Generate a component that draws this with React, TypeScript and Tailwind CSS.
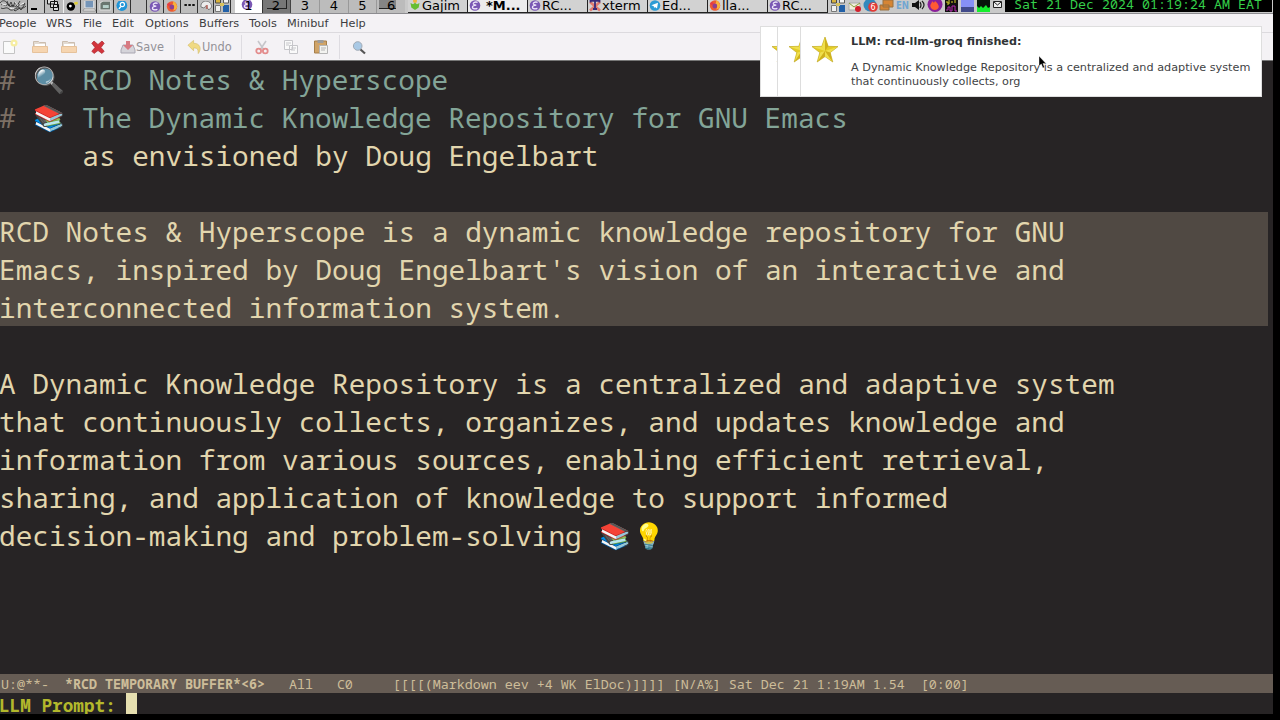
import React from 'react';

const EmacsIcon = () => (
  <svg className="h-3 w-3 shrink-0" viewBox="0 0 12 12">
    <circle cx="6" cy="5.500" r="5.300" fill="#7a58b4" />
    <path d="M8.600 2.300C6 1.500 4 2.500 4.300 3.900c.3 1 1.800 1.200 3 1.200-2 .2-3.900.7-3.900 2.200 0 1.600 2.800 1.900 5 1" fill="none" stroke="#eee6fa" strokeWidth="1.300" />
  </svg>
);

const FirefoxIcon = () => (
  <svg className="h-3 w-3 shrink-0" viewBox="0 0 12 12">
    <circle cx="6" cy="5.500" r="5.200" fill="#ee5a32" />
    <path d="M7 0c3 1.500 4.500 4 4 6.500-.5 2-2 3-4 3 2-2 1-5-1-5.500 1-1 1.500-2 1-4z" fill="#f8b13c" />
    <circle cx="5.800" cy="6" r="2.400" fill="#8b3f93" />
    <path d="M1 3.500c1-2 3-1 4 0l-2 2z" fill="#e33a48" />
  </svg>
);

const TelegramIcon = () => (
  <svg className="h-3 w-3 shrink-0" viewBox="0 0 12 12">
    <circle cx="6" cy="5.500" r="5.300" fill="#2c9bd4" />
    <path d="M2.400 5.300 9 2.700 8 8.500 6 7 5 8 4.800 6.300z" fill="#fff" />
  </svg>
);

const GajimIcon = () => (
  <svg className="h-3 w-3 shrink-0" viewBox="0 0 12 12">
    <circle cx="6" cy="1" r="2" fill="#f0b53c" />
    <path d="M1.500 3 4 4.200 6 2.800 8 4.200 10.500 3l-.8 4.500L6 10 2.300 7.500z" fill="#67bd32" />
  </svg>
);

const XtermIcon = () => (
  <svg className="h-3 w-3 shrink-0" viewBox="0 0 12 12">
    <path d="M1 2 11 10.500M11 2 1 10.500" stroke="#e27a70" strokeWidth="2.600" />
    <path d="M1.500 2.500V.8h9v1.700M6 .5v8.500M4 9h4" fill="none" stroke="#3b2a78" strokeWidth="1.800" />
  </svg>
);

const SquaresIcon = () => (
  <svg className="h-[13px] w-4 shrink-0" viewBox="0 0 16 13">
    <path d="M1.500-1h5v4h-5z" fill="#d8b23c" stroke="#4a4a4a" />
    <path d="M9.500-1h5v4h-5z" fill="#f5f5f5" stroke="#5c5c5c" />
    <path d="M1.500 5.500h5v6h-5z" fill="#f0f0f0" stroke="#777" />
    <path d="M9 5h6v7H9z" fill="#2260a8" />
    <path d="M6 3h4v3H6z" fill="#d8c25c" />
  </svg>
);

const Launcher = ({ children }: { children?: React.ReactNode }) => (
  <div className="flex h-[13px] w-[16.700px] shrink-0 items-center justify-center overflow-hidden border-r border-r-[#333] bg-[#bdbdbd]">
    {children}
  </div>
);

const Star = ({ className }: { className?: string }) => (
  <svg className={className} viewBox="0 0 26 26">
    <path d="M13 0l3.200 9.300L26 9.600l-7.800 6L20.800 25 13 19.600 5.200 25l2.600-9.400L0 9.600l9.800-.3z" fill="#e3cb25" stroke="#b9a018" strokeWidth=".6" />
    <path d="M13 1v13L9.900 9.700zM25 10l-12 4 4.800 1.700zM20 24l-7-10-.3 5.400zM6 24l7-10-4.800 1.600zM1 10l12 4-3-4.500z" fill="#efdf4c" />
    <path d="M13 14l3.200-4.700L13 1zM13 14l5.200 1.600L20 24zM13 14v5.500L6 24z" fill="#cfb01c" />
  </svg>
);

const tasks = [
  { icon: <GajimIcon />, label: 'Gajim' },
  { icon: <EmacsIcon />, label: '*M...', active: true },
  { icon: <EmacsIcon />, label: 'RC...' },
  { icon: <XtermIcon />, label: 'xterm' },
  { icon: <TelegramIcon />, label: 'Ed...' },
  { icon: <FirefoxIcon />, label: 'lla...' },
  { icon: <EmacsIcon />, label: 'RC...' },
];

const TopPanel = () => (
  <div className="flex h-[14px] shrink-0 overflow-hidden border-b border-[#8c8c90] bg-[#c9c9c9] font-['DejaVu_Sans',sans-serif] text-black">
    <div className="flex w-[235px] shrink-0">
      <div className="w-[28px] shrink-0 border-r border-[#333] bg-[#b5b5b5]">
        <svg className="h-[13px] w-[27px]" viewBox="0 0 27 13" fill="none" stroke="#333" strokeWidth=".9">
          <path d="M0 3c2-3 5-3 7 0s3 5 5 2M7 1l2 5 2-4 2 5 2-5 2 4 3-5M1 5c2-2 4 2 6 0s3 3 5 1 4 3 6 0 5 1 7-3M1 8c3 2 5-2 8 1s6-1 9-1 5 1 8-2M17 5l4 5 4-6M12 8l3 3 5-3" />
          <path d="M2 4l4 1M15 2l3 4M20 5l4-2M10 8l4 1" stroke="#fff" />
        </svg>
      </div>
      <div className="flex w-[17px] shrink-0 items-end border-r border-[#333] bg-[#c4c4c4] pb-[3px] pl-[3px]">
        <span className="h-[2px] w-[6px] bg-black" />
      </div>
      <div className="w-[19px] shrink-0 border-r border-[#eee] bg-[#bdbdbd]">
        <svg className="h-[13px] w-[18px]" viewBox="0 0 18 13" fill="#ddd" stroke="#111">
          <path d="M2.500-2h7v6h-7zM5.500 1.500h7v6h-7zM8.500 4.500h5v6h-5z" />
        </svg>
      </div>
      <Launcher>
        <svg className="h-3 w-4" viewBox="0 0 16 12"><circle cx="7" cy="5.500" r="4.300" /><circle cx="6.500" cy="5" r="1.400" fill="#fff" /><path d="M10.500 2.500 14 2" stroke="#e0cf3a" strokeWidth="2.500" /></svg>
      </Launcher>
      <Launcher>
        <svg className="h-3 w-4" viewBox="0 0 16 12"><path d="M4-1h9v8H4z" fill="#7595b8" stroke="#e9e9e9" /><path d="M3 8h11l1 2H2z" fill="#eee" stroke="#777" strokeWidth=".6" /></svg>
      </Launcher>
      <Launcher>
        <svg className="h-3 w-4" viewBox="0 0 16 12"><path d="M3 2 6 0h8v9H3z" fill="#69766f" stroke="#e5e5e5" /><path d="M6 4h6v3H6z" fill="#b5d0c9" /></svg>
      </Launcher>
      <Launcher>
        <svg className="h-3 w-4" viewBox="0 0 16 12"><circle cx="8" cy="4.500" r="5.500" fill="#2095d8" /><circle cx="8.500" cy="3.500" r="2.200" fill="none" stroke="#fff" strokeWidth="1.200" /><path d="M7 5.500 5 8" stroke="#fff" strokeWidth="1.300" /></svg>
      </Launcher>
      <Launcher />
      <Launcher><EmacsIcon /></Launcher>
      <Launcher><FirefoxIcon /></Launcher>
      <Launcher>
        <svg className="h-3 w-4" viewBox="0 0 16 12"><path d="M3.500 4h2.500M7.500 4h2.500M11.500 4h2.500" stroke="#111" strokeWidth="2.200" /></svg>
      </Launcher>
      <Launcher>
        <svg className="h-3 w-4" viewBox="0 0 16 12"><path d="M3 6c-1-8 11-8 11 0l-3 3-3-4-2 2z" fill="#ececec" stroke="#777" /><path d="M8 4h2v4H8z" fill="#b56d65" /></svg>
      </Launcher>
      <Launcher><SquaresIcon /></Launcher>
    </div>

    {/* desktops */}
    <div className="flex w-[173px] shrink-0 text-[13px] leading-[11px]">
      <div className="relative flex w-[28px] items-start justify-center border-r border-[#333] bg-white">
        <span className="absolute left-[6px] top-[-1px]"><EmacsIcon /></span>
        <span className="relative">1</span>
      </div>
      <div className="flex w-[28px] justify-center border-r border-[#444] bg-[#777]"><span className="h-[9px] w-[20px] border-b border-r border-[#222] text-center">2</span></div>
      <div className="w-[29px] border-r border-[#999] bg-[#bcbcbc] text-center">3</div>
      <div className="w-[29px] border-r border-[#999] bg-[#bcbcbc] text-center">4</div>
      <div className="w-[28px] border-r border-[#999] bg-[#bcbcbc] text-center">5</div>
      <div className="w-[28px] bg-[#bcbcbc] pl-[2px]"><div className="h-[9px] w-[17px] border-b border-[#222] bg-[#858585] pl-[8px]">6</div></div>
    </div>

    <div className="flex w-[422px] shrink-0">
      {tasks.map((t, i) => (
        <div
          key={i}
          className={`flex w-[60px] shrink-0 items-start overflow-hidden border-b border-r border-[#222] pl-[1px] text-[13px] leading-[11px] whitespace-nowrap ${
            t.active ? 'gap-[5px] bg-[#ececec] font-bold' : 'gap-[1px] bg-[#d2d2d2]'
          }`}
        >
          {t.icon}
          <span>{t.label}</span>
        </div>
      ))}
    </div>

    {/* tray */}
    <div className="flex w-[175px] shrink-0 items-start">
      <SquaresIcon />
      <svg className="ml-[2px] h-[13px] w-[156px]" viewBox="0 0 156 13">
        <path d="M1 3h11v7H1z" fill="#f2f0dc" stroke="#aaa" />
        <path d="m1 3 5 4 6-4" fill="none" stroke="#88a13d" />
        <circle cx="10" cy="9" r="3" fill="#d3202d" />
        <circle cx="22" cy="5" r="6.500" fill="#3289bd" />
        <circle cx="25" cy="7" r="4.800" fill="#e23a36" />
        <path d="M35 0h10v7H35zM32 5h9v5h-9z" fill="#d68535" stroke="#987040" />
        <path d="M64 3h3l4-3v10l-4-3h-3z" fill="#111" />
        <path d="M72 2q2 3 0 6M74 1q4 4 0 8" fill="none" stroke="#222" strokeWidth="1.200" />
        <circle cx="87" cy="4.500" r="7.500" fill="#8a209a" />
        <path d="M83 8c-2-4 1-4 1-7 2 2 2 2 3 0 4 3 6 8 0 9-2 0-3-1-4-2z" fill="#ff5a32" />
        <path d="M97 0h13v12H97z" fill="#111" />
        <path d="M98 2h2v3M101 0v4M104 1v2M107 0v3" stroke="#dbd329" fill="none" />
        <path d="M98 10h2V7h2v4h2V6h3v5h2" stroke="#bc28b5" fill="none" />
        <path d="M113 0h13v7h-13z" fill="#8790f5" /><path d="M113 7h13v5h-13z" fill="#424a8b" />
        <path d="M129 0h13v12h-13z" fill="#07160a" />
        <path d="M129 12V6l2 2 2-2 2 2 3-3 2 3 2-1v5z" fill="#15ee2d" />
        <path d="M145.500 1.500h8v6h-8z" fill="#eee" stroke="#222" />
        <path d="m146 2 3.500 3 3.500-3" fill="none" stroke="#222" />
        <text x="22.500" y="10" fontSize="8" fill="#fff" fontFamily="DejaVu Sans">6</text>
        <text x="48" y="9" fontSize="10" fontWeight="bold" fill="#71a6d2" textLength="13" lengthAdjust="spacingAndGlyphs" fontFamily="DejaVu Sans">EN</text>
      </svg>
    </div>
    <div className="h-[12px] w-[267px] shrink-0 bg-black pl-[9px] font-['Noto_Sans_Mono','DejaVu_Sans_Mono',monospace] text-[13.330px] leading-[9px] whitespace-pre text-[#35cf4a]">
      Sat 21 Dec 2024 01:19:24 AM EAT
    </div>
  </div>
);

const MenuBar = () => (
  <div className="flex h-[19px] shrink-0 overflow-hidden border-b border-[#dcdade] bg-[#f4f2f5] font-['DejaVu_Sans',sans-serif] text-[11.300px] leading-[20px] whitespace-nowrap text-[#3c3c40]">
    <span className="-ml-[1px] w-[47px]">People</span>
    <span className="w-[37px]">WRS</span>
    <span className="w-[29px]">File</span>
    <span className="w-[33px]">Edit</span>
    <span className="w-[54px]">Options</span>
    <span className="w-[50px]">Buffers</span>
    <span className="w-[38px]">Tools</span>
    <span className="w-[53px]">Minibuf</span>
    <span>Help</span>
  </div>
);

const FolderIcon = () => (
  <svg className="h-4 w-4 shrink-0" viewBox="0 0 16 16">
    <path d="M1.500 2.500h5l1 1h6v9h-12z" fill="#e3dbd2" stroke="#cbbdae" />
    <path d="M3 5h10v4H3z" fill="#fff" />
    <path d="M.5 7.500h15v6H.5z" fill="#f6d5b0" stroke="#e6c29b" />
  </svg>
);

const ToolBar = () => (
  <div className="flex h-[28px] shrink-0 items-center border-b border-[#777] bg-[#f4f2f5] font-['DejaVu_Sans',sans-serif] text-[11.400px] text-[#939197]">
    <svg className="ml-[2px] h-4 w-4" viewBox="0 0 16 16">
      <path d="M1.500 2.500h11v12h-11z" fill="#fafafa" stroke="#c4c4c4" />
      <circle cx="12" cy="4" r="3.500" fill="#f6eda0" />
      <circle cx="12" cy="4" r="1.300" fill="#fff" />
    </svg>
    <div className="ml-[14px] flex gap-[13px]"><FolderIcon /><FolderIcon /></div>
    <svg className="ml-[13px] h-4 w-4" viewBox="0 0 16 16">
      <path d="M4 2 8 5.500 12 2l2.200 2.300L11 8.500l3.200 3.700-2.200 2.300L8 11.500l-4 3-2.200-2.300L5 8.500 1.800 4.300z" fill="#d3343c" stroke="#a9282f" strokeWidth=".7" />
    </svg>
    <svg className="ml-[14px] h-4 w-4" viewBox="0 0 16 16">
      <path d="M3 6h10l2 5v3H1v-3z" fill="#d5d4da" stroke="#a9a7b2" />
      <path d="M6 2h4v4h3l-5 5-5-5h3z" fill="#d77b83" />
    </svg>
    <span className="w-[38px] pt-[2px]">Save</span>
    <span className="h-6 w-px bg-[#dedce1]" />
    <svg className="ml-[12px] h-4 w-[15px]" viewBox="0 0 16 16">
      <path d="M1 6 7 1v3c7 0 9 6 5 11 0-5-1-6-5-6v3z" fill="#f0da83" stroke="#d5bd6d" strokeWidth=".7" />
    </svg>
    <span className="w-[39px] pt-[2px]">Undo</span>
    <span className="h-6 w-px bg-[#dedce1]" />
    <svg className="ml-[12px] h-4 w-4" viewBox="0 0 16 16" fill="none">
      <path d="m4 2 6 9M12 2 6 11" stroke="#c6c6ca" strokeWidth="1.600" />
      <circle cx="4.700" cy="12" r="2.400" stroke="#e38c8c" strokeWidth="1.800" />
      <circle cx="11.300" cy="12" r="2.400" stroke="#e38c8c" strokeWidth="1.800" />
    </svg>
    <svg className="ml-[13px] h-4 w-4" viewBox="0 0 16 16" fill="#fafafa" stroke="#c6c6ca">
      <path d="M1.500 1.500h8v9h-8zM6.500 6.500h8v8h-8zM3 4h5M3 6h3M8 9h5M8 11h4" />
    </svg>
    <svg className="ml-[14px] h-4 w-4" viewBox="0 0 16 16">
      <path d="M1.500 2h12v12h-12z" fill="#d0a468" stroke="#a57f4b" />
      <path d="M4.500 1h6v3h-6z" fill="#9c9c9c" />
      <path d="M6.500 6.500h8v8h-8zM8 9h5M8 11h4" fill="#f3f3f0" stroke="#b5b5b5" />
    </svg>
    <span className="ml-[10px] h-6 w-px bg-[#dedce1]" />
    <svg className="ml-[11px] h-4 w-4" viewBox="0 0 16 16">
      <path d="m9 10 5 4.500" stroke="#555" strokeWidth="2.200" />
      <circle cx="6.700" cy="7" r="4.300" fill="#a9c9e5" stroke="#a0aab5" />
    </svg>
  </div>
);

const Emoji = ({ children }: { children: React.ReactNode }) => (
  <span className="inline-block h-[38px] w-[34px] overflow-visible pl-[1px] align-top font-['Noto_Color_Emoji'] text-[25.500px] leading-[40px]">{children}</span>
);

const Buffer = () => (
  <div className="flex-1 overflow-hidden bg-[#272425] font-['Noto_Sans_Mono','DejaVu_Sans_Mono',monospace] text-[27.760px] leading-[38px] whitespace-pre text-[#e2d6ae]">
    <div className="-mt-[1px] -ml-[1px]">
      <div className="h-[38px] text-[#83a598]"><span className="text-[#7c6f64]"># </span><Emoji>🔍</Emoji><span className="-ml-[1px]"> RCD Notes &amp; Hyperscope</span></div>
      <div className="h-[38px] text-[#83a598]"><span className="text-[#7c6f64]"># </span><Emoji>📚</Emoji><span className="-ml-[1px]"> The Dynamic Knowledge Repository for GNU Emacs</span></div>
      <div className="h-[76px]">{'     as envisioned by Doug Engelbart'}</div>
      <div className="h-[114px] w-[1268.500px] bg-[#504943]">
        <div>RCD Notes &amp; Hyperscope is a dynamic knowledge repository for GNU</div>
        <div>Emacs, inspired by Doug Engelbart's vision of an interactive and</div>
        <div>interconnected information system.</div>
      </div>
      <div className="pt-[38px]">
        <div>A Dynamic Knowledge Repository is a centralized and adaptive system</div>
        <div>that continuously collects, organizes, and updates knowledge and</div>
        <div>information from various sources, enabling efficient retrieval,</div>
        <div>sharing, and application of knowledge to support informed</div>
        <div className="h-[38px]">decision-making and problem-solving <Emoji>📚</Emoji><Emoji>💡</Emoji></div>
      </div>
    </div>
  </div>
);

const Notification = () => (
  <div className="absolute left-[760px] top-[26px] flex h-[71px] w-[502px] overflow-hidden border border-[#dedede] bg-white font-['DejaVu_Sans',sans-serif] text-[#303436]">
    <div className="flex w-[17px] shrink-0 justify-start overflow-hidden border-r border-[#ddd] pl-[11px] pt-[10px]"><Star className="h-[26px] w-[26px] shrink-0" /></div>
    <div className="flex w-[23px] shrink-0 overflow-hidden border-r border-[#ddd] pl-[11px] pt-[10px]"><Star className="h-[26px] w-[26px] shrink-0" /></div>
    <div className="w-[50px] shrink-0 pl-[11px] pt-[10px]"><Star className="h-[26px] w-[26px]" /></div>
    <div className="pt-[7px] whitespace-nowrap">
      <div className="h-[27px] text-[11.200px] leading-[15px] font-bold">LLM: rcd-llm-groq finished:</div>
      <div className="text-[11.230px] leading-[14px] text-[#3f4345]">A Dynamic Knowledge Repository is a centralized and adaptive system</div>
      <div className="text-[11.230px] leading-[13px] text-[#3f4345]">that continuously collects, org</div>
    </div>
  </div>
);

export default function App() {
  return (
    <div className="relative h-[720px] w-[1280px] overflow-hidden bg-black">
      <div className="flex h-[714px] w-[1273px] flex-col overflow-hidden">
        <TopPanel />
        <MenuBar />
        <ToolBar />
        <Buffer />
        {/* mode line */}
        <div className="h-[19px] shrink-0 bg-[#665c54] pl-px font-['Noto_Sans_Mono','DejaVu_Sans_Mono',monospace] text-[13.340px] leading-[20px] whitespace-pre text-[#cdbd99]">
          {'U:@**-  '}<b>*RCD TEMPORARY BUFFER*&lt;6&gt;</b>{'   All   C0     [[[[(Markdown eev +4 WK ElDoc)]]]] [N/A%] Sat Dec 21 1:19AM 1.54  [0:00]'}
        </div>
        <div className="flex h-[21px] shrink-0 overflow-hidden bg-[#272425] font-['Noto_Sans_Mono','DejaVu_Sans_Mono',monospace] text-[17.700px] leading-[24px] font-bold whitespace-pre text-[#b3b82c]">
          <span className="-ml-[1px] w-[127px]">LLM Prompt: </span>
          <span className="w-[11px] bg-[#e6dfb0]" />
        </div>
      </div>
      <Notification />
      <svg className="absolute left-[1038px] top-[56px] h-[13px] w-[9px]" viewBox="0 0 9 13">
        <path d="M1 0v10l2.300-2 1.600 4 1.700-.7-1.700-3.700H8z" fill="#000" stroke="#fff" strokeWidth=".4" />
      </svg>
    </div>
  );
}
